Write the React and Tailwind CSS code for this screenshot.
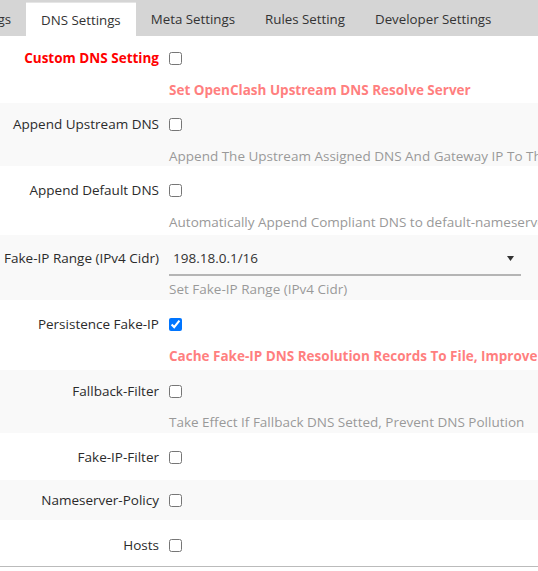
import React from 'react'

const tabs = ['Meta Settings', 'Rules Setting', 'Developer Settings']

const Check = ({ checked }) => (
  <input
    type="checkbox"
    defaultChecked={checked}
    className="m-0 ml-[10px] w-[13px] h-[13px] shrink-0"
  />
)

const Row = ({ label, labelClass, checked, desc, descClass, rowClass, gapClass }) => (
  <div className={`flex flex-col ${rowClass}`}>
    <div className="flex items-center h-[20px]">
      <div className={`w-[159px] shrink-0 text-right whitespace-nowrap ${labelClass || 'text-[#2b2b2b]'}`}>
        {label}
      </div>
      <Check checked={checked} />
    </div>
    {desc && (
      <div className={`pl-[169px] h-[20px] flex items-center whitespace-nowrap ${gapClass} ${descClass || 'text-[#999]'}`}>
        {desc}
      </div>
    )}
  </div>
)

export default function App() {
  return (
    <div className="w-[538px] h-[571px] overflow-hidden bg-white text-[13.5px] font-['Open_Sans',sans-serif]">
      {/* Tabs */}
      <div className="flex h-[36px] bg-[#d5d5d5] text-[#333] text-[13.3px]">
        <div className="w-[26px] shrink-0 overflow-hidden flex justify-end pr-[15px] pt-[10px] whitespace-nowrap">
          Overwrite Settings
        </div>
        <div className="mt-[2px] px-[15px] pt-[8px] bg-white border-t border-[#e5e5e5] whitespace-nowrap">
          DNS Settings
        </div>
        {tabs.map((t) => (
          <div key={t} className="px-[15px] pt-[10px] whitespace-nowrap">
            {t}
          </div>
        ))}
      </div>

      {/* Rows */}
      <Row
        label="Custom DNS Setting"
        labelClass="text-[#ff0000] font-bold"
        desc="Set OpenClash Upstream DNS Resolve Server"
        descClass="text-[#ff7f7f] font-bold"
        rowClass="h-[67px] pt-[12px]"
        gapClass="mt-[12px]"
      />
      <Row
        label="Append Upstream DNS"
        desc="Append The Upstream Assigned DNS And Gateway IP To The Nameserver"
        rowClass="h-[63px] pt-[11px] bg-[#f9f9f9]"
        gapClass="mt-[12px]"
      />
      <Row
        label="Append Default DNS"
        desc="Automatically Append Compliant DNS to default-nameserver"
        rowClass="h-[69px] pt-[14px]"
        gapClass="mt-[12px]"
      />
      <div className="flex flex-col h-[65px] pt-[5px] bg-[#f9f9f9]">
        <div className="flex items-center h-[36px]">
          <div className="w-[159px] shrink-0 text-right whitespace-nowrap text-[#2b2b2b]">
            Fake-IP Range (IPv4 Cidr)
          </div>
          <div className="relative ml-[10px] w-[352px] h-[36px]">
            <select
              defaultValue="198.18.0.1/16"
              className="appearance-none w-full h-full bg-transparent border-b-2 border-[#b5b5b5] pl-[4px] pt-[2px] text-[#333] outline-none"
            >
              <option>198.18.0.1/16</option>
            </select>
            <svg className="absolute right-[7px] top-[16px] pointer-events-none" width="7" height="5" viewBox="0 0 7 5">
              <path d="M0 0h7L3.5 5z" fill="#333" />
            </svg>
          </div>
        </div>
        <div className="pl-[169px] h-[20px] mt-[3px] flex items-center whitespace-nowrap text-[#999]">
          Set Fake-IP Range (IPv4 Cidr)
        </div>
      </div>
      <Row
        label="Persistence Fake-IP"
        checked
        desc="Cache Fake-IP DNS Resolution Records To File, Improve The Response Speed After Startup"
        descClass="text-[#ff7f7f] font-bold"
        rowClass="h-[70px] pt-[14px]"
        gapClass="mt-[12px]"
      />
      <Row
        label="Fallback-Filter"
        desc="Take Effect If Fallback DNS Setted, Prevent DNS Pollution"
        rowClass="h-[63px] pt-[11px] bg-[#f9f9f9]"
        gapClass="mt-[11px]"
      />
      <Row label="Fake-IP-Filter" rowClass="h-[47px] pt-[14px]" />
      <Row label="Nameserver-Policy" rowClass="h-[40px] pt-[10px] bg-[#f9f9f9]" />
      <Row label="Hosts" rowClass="h-[47px] pt-[15px] border-b border-[#bbb]" />
    </div>
  )
}
